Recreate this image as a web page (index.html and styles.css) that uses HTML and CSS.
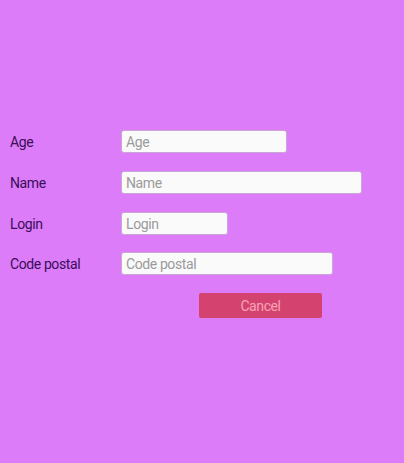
FILE: index.html
```html
<!DOCTYPE html>
<html>
<head>
<meta charset="utf-8">
<link rel="stylesheet" href="styles.css">
</head>
<body>
<form class="form">
  <div class="row">
    <label class="label">Age</label>
    <input class="field w-age" placeholder="Age">
  </div>
  <div class="row">
    <label class="label">Name</label>
    <input class="field w-name" placeholder="Name">
  </div>
  <div class="row">
    <label class="label">Login</label>
    <input class="field w-login" placeholder="Login">
  </div>
  <div class="row">
    <label class="label">Code postal</label>
    <input class="field w-code" placeholder="Code postal">
  </div>
  <div class="actions">
    <button type="button" class="cancel">Cancel</button>
  </div>
</form>
</body>
</html>
```

FILE: styles.css
```css
html, body {
  margin: 0;
  padding: 0;
  background: #dc7cf8;
  height: 100%;
}
body {
  font-family: Roboto, "Liberation Sans", sans-serif;
}
.form {
  padding: 130px 0 0 10px;
  display: flex;
  flex-direction: column;
  gap: 18px;
}
.row {
  display: flex;
  align-items: center;
  height: 23px;
}
.row:nth-child(4) {
  margin-top: -1px;
}
.label {
  width: 111px;
  font-size: 14px;
  letter-spacing: -0.4px;
  line-height: 22px;
  color: #3a0d58;
}
.field {
  box-sizing: border-box;
  height: 23px;
  margin: 0;
  padding: 0 4px;
  border: 1px solid #c9a6d6;
  border-radius: 3px;
  background: #fbfafb;
  font-family: Roboto, "Liberation Sans", sans-serif;
  font-size: 14px;
  letter-spacing: -0.4px;
  color: #333;
  outline: none;
}
.field::placeholder {
  color: #9a9a9a;
}
.w-age { width: 166px; }
.w-name { width: 241px; }
.w-login { width: 107px; }
.w-code { width: 212px; }
.actions {
  padding-left: 189px;
}
.cancel {
  width: 123px;
  height: 25px;
  border: none;
  border-radius: 2px;
  background: #d44270;
  color: #f8a4b4;
  font-family: Roboto, "Liberation Sans", sans-serif;
  font-size: 14px;
  letter-spacing: -0.4px;
  padding: 0;
}
```
